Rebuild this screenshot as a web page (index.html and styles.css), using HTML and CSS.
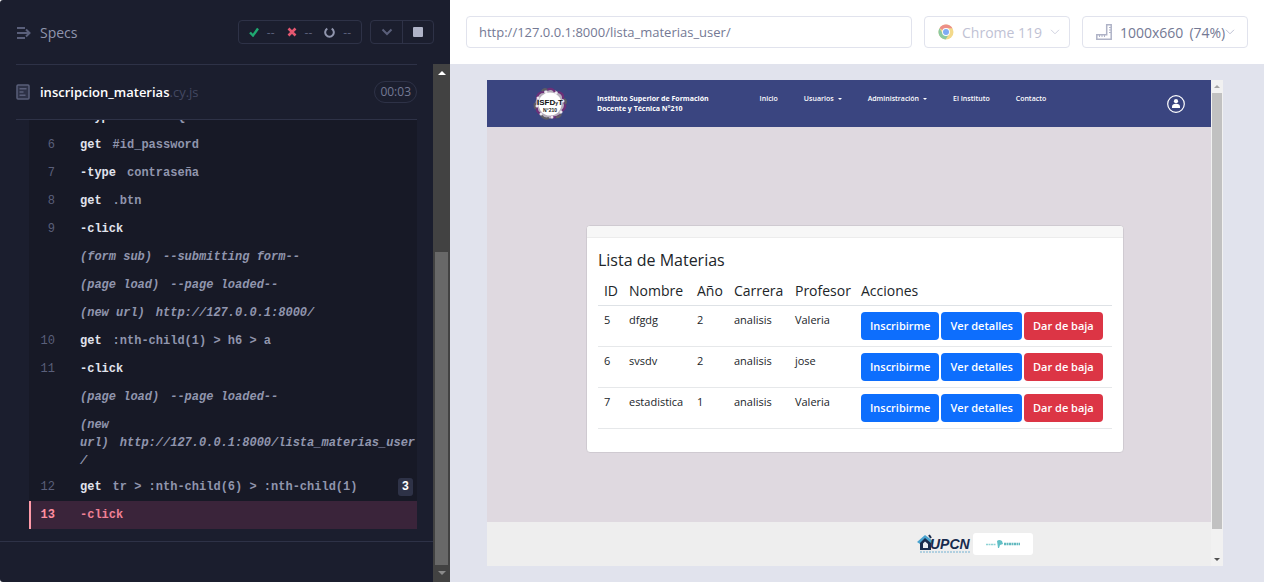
FILE: index.html
```html
<!DOCTYPE html>
<html lang="es">
<head>
<meta charset="utf-8">
<meta name="viewport" content="width=device-width, initial-scale=1">
<title>inscripcion_materias.cy.js</title>
<link rel="stylesheet" href="styles.css">
</head>
<body>
<div class="app">
  <aside class="reporter">
    <header class="toolbar">
      <a class="specs" href="#">
        <svg width="16" height="14" viewBox="0 0 16 14" fill="none" stroke="#5a5f7a" stroke-width="2"><path d="M1 2h8M1 7h12M1 12h8M10 3.500l3.500 3.500-3.500 3.500"/></svg>
        <span>Specs</span>
      </a>
      <div class="stats">
        <span class="stat"><svg width="10" height="10" viewBox="0 0 10 10" fill="none" stroke="#1fa971" stroke-width="2.400"><path d="M1 5.500l3 3L9 1.500"/></svg>--</span>
        <span class="stat"><svg width="10" height="10" viewBox="0 0 10 10" fill="none" stroke="#e45770" stroke-width="2.600"><path d="M1.500 1.500l7 7M8.500 1.500l-7 7"/></svg>--</span>
        <span class="stat"><svg width="11" height="11" viewBox="0 0 11 11" fill="none" stroke="#9095ad" stroke-width="2"><path d="M3.300 1.700a4.300 4.300 0 1 0 4.400 0"/></svg>--</span>
      </div>
      <div class="controls">
        <button type="button" class="control" aria-label="Opciones"><svg width="12" height="8" viewBox="0 0 12 8" fill="none" stroke="#5a5f7a" stroke-width="2"><path d="M1.500 1.500L6 6l4.500-4.500"/></svg></button>
        <button type="button" class="control" aria-label="Detener"><span class="stop"></span></button>
      </div>
    </header>
    <div class="scroller">
      <div class="run">
        <div class="spec">
          <svg width="14" height="16" viewBox="0 0 14 16" fill="none" stroke="#5a5f7a" stroke-width="1.500"><rect x="1" y="1" width="12" height="14" rx="1" fill="#2e3247"/><path d="M3.500 4.700h7M3.500 8h4M3.500 11.300h6"/></svg>
          <span class="spec-name"><strong>inscripcion_materias</strong>.cy.js</span>
          <span class="timer">00:03</span>
        </div>
        <div class="log-window">
          <ol class="log">
            <li class="row"><span class="num">5</span><span class="cmd"><b>-type</b><span class="arg">usuarioQ</span></span></li>
            <li class="row"><span class="num">6</span><span class="cmd"><b>get</b><span class="arg">#id_password</span></span></li>
            <li class="row"><span class="num">7</span><span class="cmd"><b>-type</b><span class="arg">contraseña</span></span></li>
            <li class="row"><span class="num">8</span><span class="cmd"><b>get</b><span class="arg">.btn</span></span></li>
            <li class="row"><span class="num">9</span><span class="cmd"><b>-click</b></span></li>
            <li class="row event"><span class="num"></span><span class="cmd">(form sub)<span class="arg">--submitting form--</span></span></li>
            <li class="row event"><span class="num"></span><span class="cmd">(page load)<span class="arg">--page loaded--</span></span></li>
            <li class="row event"><span class="num"></span><span class="cmd">(new url)<span class="arg">http://127.0.0.1:8000/</span></span></li>
            <li class="row"><span class="num">10</span><span class="cmd"><b>get</b><span class="arg">:nth-child(1) &gt; h6 &gt; a</span></span></li>
            <li class="row"><span class="num">11</span><span class="cmd"><b>-click</b></span></li>
            <li class="row event"><span class="num"></span><span class="cmd">(page load)<span class="arg">--page loaded--</span></span></li>
            <li class="row event long"><span class="num"></span><span class="cmd">(new<br>url)<span class="arg">http://127.0.0.1:8000/lista_materias_user<wbr>/</span></span></li>
            <li class="row"><span class="num">12</span><span class="cmd"><b>get</b><span class="arg">tr &gt; :nth-child(6) &gt; :nth-child(1)</span></span><span class="count">3</span></li>
            <li class="row active"><span class="num">13</span><span class="cmd"><b>-click</b></span></li>
          </ol>
        </div>
        <div class="run-end"></div>
      </div>
      <div class="bar bar-dark"><i class="up"></i><span class="thumb"></span><i class="down"></i></div>
    </div>
  </aside>

  <main class="preview">
    <div class="address">
      <input class="field url" type="text" aria-label="URL" value="http://127.0.0.1:8000/lista_materias_user/">
      <button type="button" class="field browser">
        <svg width="16" height="16" viewBox="0 0 16 16"><circle cx="8" cy="8" r="7.500" fill="#f3d98b"/><path d="M8 8L1.500 4.200A7.500 7.500 0 0 1 14.500 4.300L8 4.300z" fill="#ec8f88"/><path d="M1.500 4.200A7.500 7.500 0 0 0 7.600 15.500L11.200 9.800 8 11.500 4.800 9.800z" fill="#8cc9a0"/><circle cx="8" cy="8" r="3.900" fill="#fff"/><circle cx="8" cy="8" r="3" fill="#7fabf3"/></svg>
        <span>Chrome 119</span>
        <svg class="chev" width="10" height="6" viewBox="0 0 10 6" fill="none" stroke="#d0d2e0"><path d="M1 .8l4 4 4-4"/></svg>
      </button>
      <button type="button" class="field size">
        <svg width="16" height="16" viewBox="0 0 16 16" fill="#fff" stroke="#afb3c7" stroke-width="1.500"><path d="M10.700 .8h4.500v14.400H.8v-4.500h9.900z"/><path d="M3.500 11v2M6 11v2M8.500 11v2M13 3.500h2M13 6h2M13 8.500h2" stroke-width="1"/></svg>
        <span class="dims">1000x660</span><span>(74%)</span>
        <svg class="chev" width="10" height="6" viewBox="0 0 10 6" fill="none" stroke="#bfc2d4"><path d="M1 .8l4 4 4-4"/></svg>
      </button>
    </div>

    <div class="stage">
      <div class="frame">
        <div class="site">
          <nav class="nav">
            <svg class="crest" width="34" height="34" viewBox="0 0 34 34">
              <circle cx="17" cy="17" r="14.500" fill="#b5adbb"/>
              <g fill="none" stroke-width="2.200">
                <g stroke="#6d2f78"><path d="M4 12q0-7 7-7M14 3q5-3 8 2M25 5q6 1 5 7M31 15q3 5-2 9M27 28q-5 4-9 1M8 27q-5-2-4-7"/></g>
                <g stroke="#5e5c64"><path d="M9 4q2-3 5-1M31 12q3 2 1 5M28 27q-2 4-5 3M8 28q3 5 8 3M2 16q-1 4 1 6"/></g>
              </g>
              <g fill="#eee8f0"><circle cx="13" cy="5" r="1.500"/><circle cx="23" cy="6" r="1.500"/><circle cx="30" cy="14" r="1.500"/><circle cx="28" cy="25" r="1.500"/><circle cx="19" cy="30" r="1.500"/><circle cx="8" cy="27" r="1.500"/><circle cx="4" cy="19" r="1.500"/><circle cx="5" cy="11" r="1.500"/></g>
              <circle cx="17" cy="17" r="11.500" fill="#fff"/>
              <text class="crest-main" x="17" y="18" text-anchor="middle">ISFD<tspan class="crest-y">y</tspan>T</text>
              <text class="crest-sub" x="17" y="25" text-anchor="middle">N°210</text>
            </svg>
            <span class="brand">Instituto Superior de Formación<br>Docente y Técnica N°210</span>
            <div class="links">
              <a href="#">Inicio</a>
              <a href="#" class="drop">Usuarios</a>
              <a href="#" class="drop">Administración</a>
              <a href="#">El Instituto</a>
              <a href="#">Contacto</a>
            </div>
            <a class="user" href="#" aria-label="Usuario"><svg width="20" height="20" viewBox="0 0 20 20"><circle cx="10" cy="10" r="8.300" fill="none" stroke="#fff" stroke-width="1.200"/><circle cx="10" cy="7.200" r="2.100" fill="#fff"/><path d="M6 14v-1.300q0-3 4-3t4 3V14z" fill="#fff"/></svg></a>
          </nav>
          <section class="content">
            <div class="card">
              <div class="card-head"></div>
              <div class="card-body">
                <h1>Lista de Materias</h1>
                <table>
                  <thead><tr><th class="c-id">ID</th><th class="c-name">Nombre</th><th class="c-year">Año</th><th class="c-career">Carrera</th><th class="c-prof">Profesor</th><th>Acciones</th></tr></thead>
                  <tbody>
                    <tr><td>5</td><td>dfgdg</td><td>2</td><td>analisis</td><td>Valeria</td><td><div class="actions"><button type="button" class="btn">Inscribirme</button><button type="button" class="btn">Ver detalles</button><button type="button" class="btn danger">Dar de baja</button></div></td></tr>
                    <tr><td>6</td><td>svsdv</td><td>2</td><td>analisis</td><td>jose</td><td><div class="actions"><button type="button" class="btn">Inscribirme</button><button type="button" class="btn">Ver detalles</button><button type="button" class="btn danger">Dar de baja</button></div></td></tr>
                    <tr><td>7</td><td>estadistica</td><td>1</td><td>analisis</td><td>Valeria</td><td><div class="actions"><button type="button" class="btn">Inscribirme</button><button type="button" class="btn">Ver detalles</button><button type="button" class="btn danger">Dar de baja</button></div></td></tr>
                  </tbody>
                </table>
              </div>
            </div>
          </section>
          <footer class="foot">
            <svg width="54" height="20" viewBox="0 0 54 20">
              <path d="M0 8L8 1l8 6-1 3-7-5-5 5z" fill="#49a3cf"/>
              <path d="M3 9l5-5 6 5v7H3z" fill="#172b4d"/>
              <path d="M6 9.500l2-2 3 2.500v4H6z" fill="#e8edf2"/><path d="M12 1l2 3" stroke="#172b4d" stroke-width="2"/>
              <text class="upcn" x="13" y="15">UPCN</text>
              <path d="M3 18h50" stroke="#9dc6dc" stroke-width="1.500" stroke-dasharray="2 1"/>
            </svg>
            <span class="plate">
              <svg width="36" height="10" viewBox="0 0 36 10"><path d="M1 5.500h10" stroke="#8fd3d5" stroke-width="1.400" stroke-dasharray="2 .5"/><path d="M12 2q2-2 5 0l1 3-3 1-1 3h-1z" fill="#62c0c6"/><path d="M19 5h16" stroke="#62b9bf" stroke-width="2.600" stroke-dasharray="2 .5"/></svg>
            </span>
          </footer>
        </div>
        <div class="bar bar-light"><i class="up"></i><span class="thumb"></span><i class="down"></i></div>
      </div>
    </div>
  </main>
</div>
</body>
</html>
```
FILE: styles.css
```css
* { box-sizing: border-box; }
body { margin: 0; background: #fff; font-family: "Open Sans", sans-serif; }
button, input { font: inherit; margin: 0; }
a { color: inherit; text-decoration: none; }
svg { flex: none; display: block; }

.app { display: grid; grid-template-columns: 450px minmax(0, 1fr); min-height: 100vh; }

/* Reporter */
.reporter { display: flex; flex-direction: column; background: #1b1e2e; color: #9095ad; border-radius: 3px 0 0 3px; overflow: hidden; }
.toolbar { display: flex; align-items: center; height: 64px; padding: 2px 16px 0; }
.specs { display: flex; align-items: center; gap: 8px; margin-right: auto; font-size: 14px; line-height: 20px; }
.stats, .controls { display: flex; height: 24px; margin-bottom: 2px; border: 1px solid #2e3247; border-radius: 4px; }
.stats { align-items: center; gap: 12px; padding: 0 10px; font-size: 12px; color: #5a5f7a; }
.stat { display: flex; align-items: center; gap: 8px; }
.controls { margin-left: 8px; }
.control { display: flex; align-items: center; justify-content: center; width: 31px; padding: 0; border: 0; background: none; }
.control + .control { border-left: 1px solid #2e3247; }
.stop { width: 10px; height: 10px; border-radius: 1px; background: #afb3c7; }
.scroller { flex: 1; display: grid; grid-template-columns: minmax(0, 1fr) 17px; }
.spec { display: flex; align-items: center; gap: 10px; height: 56px; margin: 0 16px; border: solid #2e3247; border-width: 1px 0; }
.spec-name { font-size: 13px; color: #434861; }
.spec-name strong { color: #fff; font-weight: 600; }
.timer { margin-left: auto; padding: 0 5px; border: 1px solid #2e3247; border-radius: 11px; font-size: 12px; line-height: 20px; color: #747994; }
.log-window { margin: 0 16px 0 29px; overflow: hidden; background: #171926; }
.log { list-style: none; margin: -17px 0 0; padding: 0; font: bold 12px/18px "Liberation Mono", monospace; }
.row { display: flex; padding: 5px 0; }
.num { width: 26px; margin-right: 25px; text-align: right; font-weight: normal; color: #5a5f7a; flex: none; }
.cmd { flex: 1; }
.cmd b { color: #e1e3ed; }
.arg { margin-left: 11px; }
.event { font-style: italic; }
.long { padding-bottom: 3px; }
.count { margin-right: 4px; padding: 0 4px; border-radius: 3px; background: #2e3247; color: #fff; }
.active { background: #3a243a; color: #ff8fa0; border-left: 2px solid #ff9aa8; }
.active .num { width: 24px; color: inherit; font-weight: bold; }
.active .cmd b { color: #f08095; }
.run-end { margin-top: 12px; border-top: 1px solid #2e3247; }

/* Scrollbars */
.bar { display: flex; flex-direction: column; align-items: center; }
.up, .down { border: 4px solid transparent; }
.up { border-top: 0; border-bottom-color: currentColor; }
.down { border-bottom: 0; border-top-color: currentColor; }
.bar-dark { background: #424242; color: #fff; padding: 7px 0; }
.bar-dark .thumb { flex: 1; width: 13px; margin: 177px 0 6px; background: #686868; }
.bar-dark .down { color: #8a8a8a; }
.bar-light { width: 12px; background: #f1f1f1; color: #505050; padding: 5px 0; }
.bar-light .thumb { flex: 1; width: 10px; margin: 5px 0 29px; background: #c1c1c1; }
.bar-light .up, .bar-light .down { border-left-width: 3px; border-right-width: 3px; }
.bar-light .up { border-bottom-width: 3px; color: #a3a3a3; }
.bar-light .down { border-top-width: 3px; }

/* Preview */
.preview { display: flex; flex-direction: column; background: #e1e3ed; }
.address { display: flex; gap: 12px; height: 64px; padding: 16px; background: #fff; }
.field { height: 32px; border: 1px solid #e1e3ed; border-radius: 4px; background: #fff; color: #747994; font-size: 14px; }
.url { flex: 1; min-width: 0; padding: 0 12px; font-size: 13px; }
.browser, .size { display: flex; align-items: center; gap: 8px; padding: 0 13px; white-space: nowrap; }
.browser { width: 146px; color: #bfc2d4; }
.size { width: 166px; gap: 6px; }
.size .dims { margin-left: 2px; }
.size .chev { margin-left: -6px; }
.stage { flex: 1; display: flex; padding: 16px 41px 16px 37px; }
.frame { flex: 1; display: flex; min-width: 0; }
.site { flex: 1; display: flex; flex-direction: column; min-width: 0; background: #dfd9e0; color: #212529; }
.nav { display: flex; align-items: center; height: 47px; padding: 0 25px 0 46px; background: #3a4580; color: #fff; font-size: 7px; font-weight: 700; line-height: 10px; white-space: nowrap; }
.brand { margin-left: 30px; }
.links { display: flex; gap: 26px; margin: 0 auto 10px 51px; font-weight: 600; }
.drop { display: flex; align-items: center; gap: 4px; }
.drop::after { content: ""; border: 2px solid transparent; border-top-color: currentColor; border-bottom: 0; }
.crest-main { font: bold 8px "Liberation Sans", sans-serif; fill: #111; }
.crest-y { font-size: 5px; }
.crest-sub { font: bold 5px "Liberation Sans", sans-serif; fill: #222; }
.content { flex: 1; display: flex; flex-direction: column; align-items: center; justify-content: center; padding: 28px 2px 0 14px; }
.card { width: 76%; background: #fff; border: 1px solid #cfcad1; border-radius: 4px; overflow: hidden; }
.card-head { height: 12px; background: #f7f7f7; border-bottom: 1px solid #ececec; }
.card-body { padding: 12px 11px 23px; }
h1 { margin: 0 0 7px; font-size: 16px; font-weight: 500; line-height: 20px; }
table { width: 100%; table-layout: fixed; border-collapse: collapse; font-size: 11px; line-height: 15px; }
th { padding: 4px 6px 5px; font-size: 14px; font-weight: 400; line-height: 19px; text-align: left; border-bottom: 1px solid #dee2e6; }
td { padding: 6px; vertical-align: top; border-bottom: 1px solid #e6e8ea; }
th + th, td + td { padding-right: 0; }
.c-id { width: 25px; }
.c-name { width: 68px; }
.c-year { width: 37px; }
.c-career { width: 61px; }
.c-prof { width: 66px; }
.actions { display: flex; gap: 2px; }
.btn { height: 28px; padding: 0 9px; border: 0; border-radius: 4px; background: #0d6efd; color: #fff; font-size: 11px; font-weight: 600; white-space: nowrap; }
.danger { background: #dc3545; }
.foot { display: flex; align-items: center; gap: 2px; height: 44px; padding-left: 430px; background: #eee; }
.upcn { font: italic bold 14px "Liberation Sans", sans-serif; fill: #172b4d; }
.plate { display: flex; align-items: center; justify-content: center; width: 60px; height: 22px; border-radius: 3px; background: #fff; }
```
